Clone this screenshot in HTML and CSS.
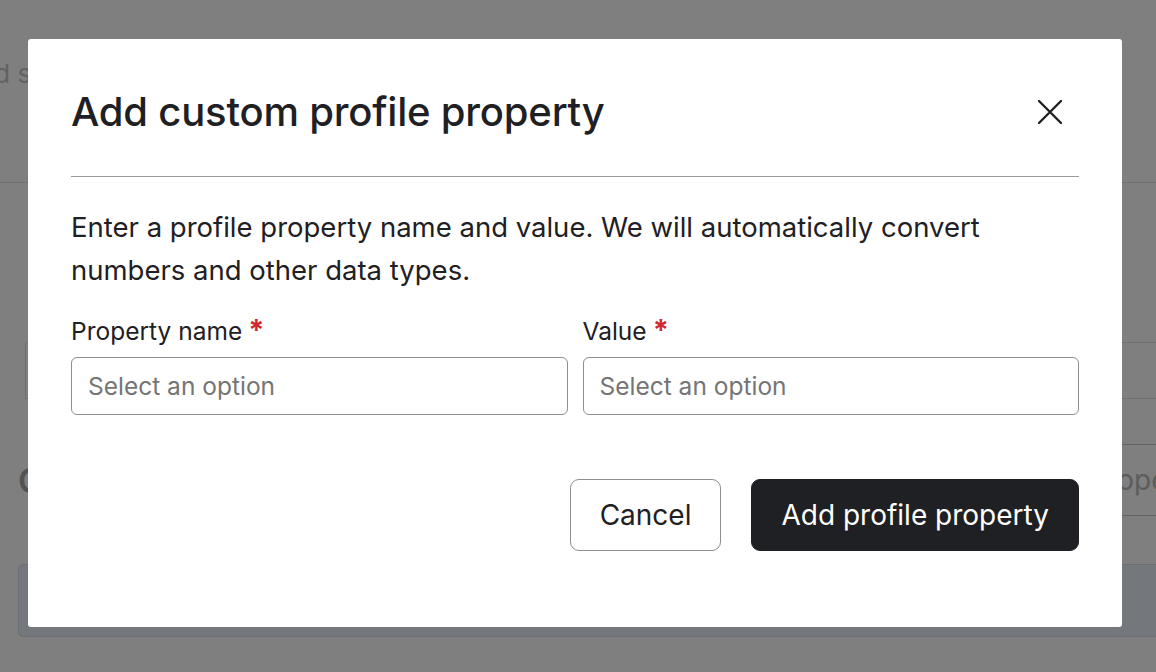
FILE: index.html
```html
<!DOCTYPE html>
<html lang="en">
<head>
    <meta charset="UTF-8">
    <meta name="viewport" content="width=device-width, initial-scale=1.0">
    <title>Add custom profile property</title>
    <link rel="stylesheet" href="styles.css">
</head>
<body>
    <!-- Page behind the dialog -->
    <div class="page">
        <p class="page-intro">Saved segments and lists</p>
        <div class="page-card">
            <div class="card-row"></div>
        </div>
        <div class="page-section">
            <h2 class="section-title">Custom properties</h2>
            <button class="ghost-btn">Add property</button>
        </div>
        <div class="info-box"></div>
    </div>

    <div class="backdrop">
        <div class="modal">
            <div class="modal-header">
                <h1>Add custom profile property</h1>
                <button class="close-btn" aria-label="Close">
                    <svg width="26" height="26" viewBox="0 0 26 26">
                        <path d="M2 2 L24 24 M24 2 L2 24" stroke="#222" stroke-width="2.4" stroke-linecap="round" fill="none"/>
                    </svg>
                </button>
            </div>

            <p class="modal-text">Enter a profile property name and value. We will automatically convert numbers and other data types.</p>

            <div class="fields">
                <div class="field">
                    <label for="prop-name">Property name<span class="req">*</span></label>
                    <input type="text" id="prop-name" class="input-field" placeholder="Select an option">
                </div>
                <div class="field">
                    <label for="prop-value">Value<span class="req">*</span></label>
                    <input type="text" id="prop-value" class="input-field" placeholder="Select an option">
                </div>
            </div>

            <div class="actions">
                <button class="btn btn-cancel">Cancel</button>
                <button class="btn btn-primary">Add profile property</button>
            </div>
        </div>
    </div>
</body>
</html>
```

FILE: styles.css
```css
* {
    margin: 0;
    padding: 0;
    box-sizing: border-box;
}

body {
    font-family: Inter, "Noto Sans", Arial, sans-serif;
    background-color: #fff;
    color: #1f2023;
    width: 1156px;
    height: 672px;
    overflow: hidden;
}

/* Page behind the overlay */
.page {
    height: 672px;
    overflow: hidden;
}

.page-intro {
    font-size: 26px;
    color: #c4c4c4;
    padding-top: 58px;
    margin-left: -66px;
    height: 183px;
    border-bottom: 1px solid #e2e2e2;
}

.page-card {
    margin: 159px 0 0 25px;
    border-left: 1px solid #e2e2e2;
    border-top: 1px solid #e2e2e2;
}

.card-row {
    height: 56px;
    border-bottom: 1px solid #e2e2e2;
}

.page-section {
    display: flex;
    justify-content: space-between;
    align-items: center;
    margin-top: 45px;
    padding-left: 18px;
}

.section-title {
    font-size: 34px;
    font-weight: 600;
    color: #a6a6a6;
}

.ghost-btn {
    font-family: inherit;
    font-size: 28px;
    color: #b8b8b8;
    background: #fff;
    border: 1px solid #c8c8c8;
    border-right: none;
    height: 72px;
    padding: 0 20px;
    margin-right: -68px;
    white-space: nowrap;
}

.info-box {
    margin: 48px 0 0 18px;
    height: 73px;
    background-color: #e9f0fb;
    border: 1px solid #d4dcea;
    border-right: none;
    border-radius: 6px 0 0 6px;
}

/* Overlay + dialog */
.backdrop {
    position: fixed;
    top: 0;
    left: 0;
    width: 100%;
    height: 100%;
    background-color: rgba(0, 0, 0, 0.5);
    padding: 39px 0 0 28px;
}

.modal {
    width: 1094px;
    height: 588px;
    background-color: #fff;
    border-radius: 3px;
    padding: 0 43px;
}

.modal-header {
    display: flex;
    justify-content: space-between;
    align-items: center;
    height: 138px;
    border-bottom: 1px solid #9a9a9a;
    padding-top: 8px;
}

.modal-header h1 {
    font-size: 40px;
    font-weight: 500;
    letter-spacing: -0.2px;
    color: #1f2023;
}

.close-btn {
    background: none;
    border: none;
    width: 26px;
    height: 26px;
    margin-right: 16px;
    cursor: pointer;
}

.modal-text {
    font-size: 27.5px;
    line-height: 43px;
    margin-top: 29px;
    color: #1f2023;
}

.fields {
    display: flex;
    gap: 15px;
    margin-top: 23px;
}

.field {
    flex: 1;
    display: flex;
    flex-direction: column;
}

.field label {
    font-size: 24.5px;
    line-height: 32px;
    height: 32px;
    margin-bottom: 10px;
}

.req {
    color: #d0282e;
    font-weight: 700;
    font-size: 29px;
    line-height: 1;
    margin-left: 6px;
}

.input-field {
    height: 58px;
    border: 1px solid #8e8e8e;
    border-radius: 6px;
    padding: 0 16px;
    font-family: inherit;
    font-size: 24.5px;
    color: #1f2023;
}

.input-field::placeholder {
    color: #757575;
}

.actions {
    display: flex;
    justify-content: flex-end;
    gap: 30px;
    margin-top: 64px;
}

.btn {
    height: 72px;
    border-radius: 9px;
    font-family: inherit;
    font-size: 28px;
    padding: 0 29px;
    cursor: pointer;
}

.btn-cancel {
    background: #fff;
    border: 1px solid #8e8e8e;
    color: #1f2023;
}

.btn-primary {
    background: #1f2023;
    border: 1px solid #1f2023;
    color: #fff;
}
```
